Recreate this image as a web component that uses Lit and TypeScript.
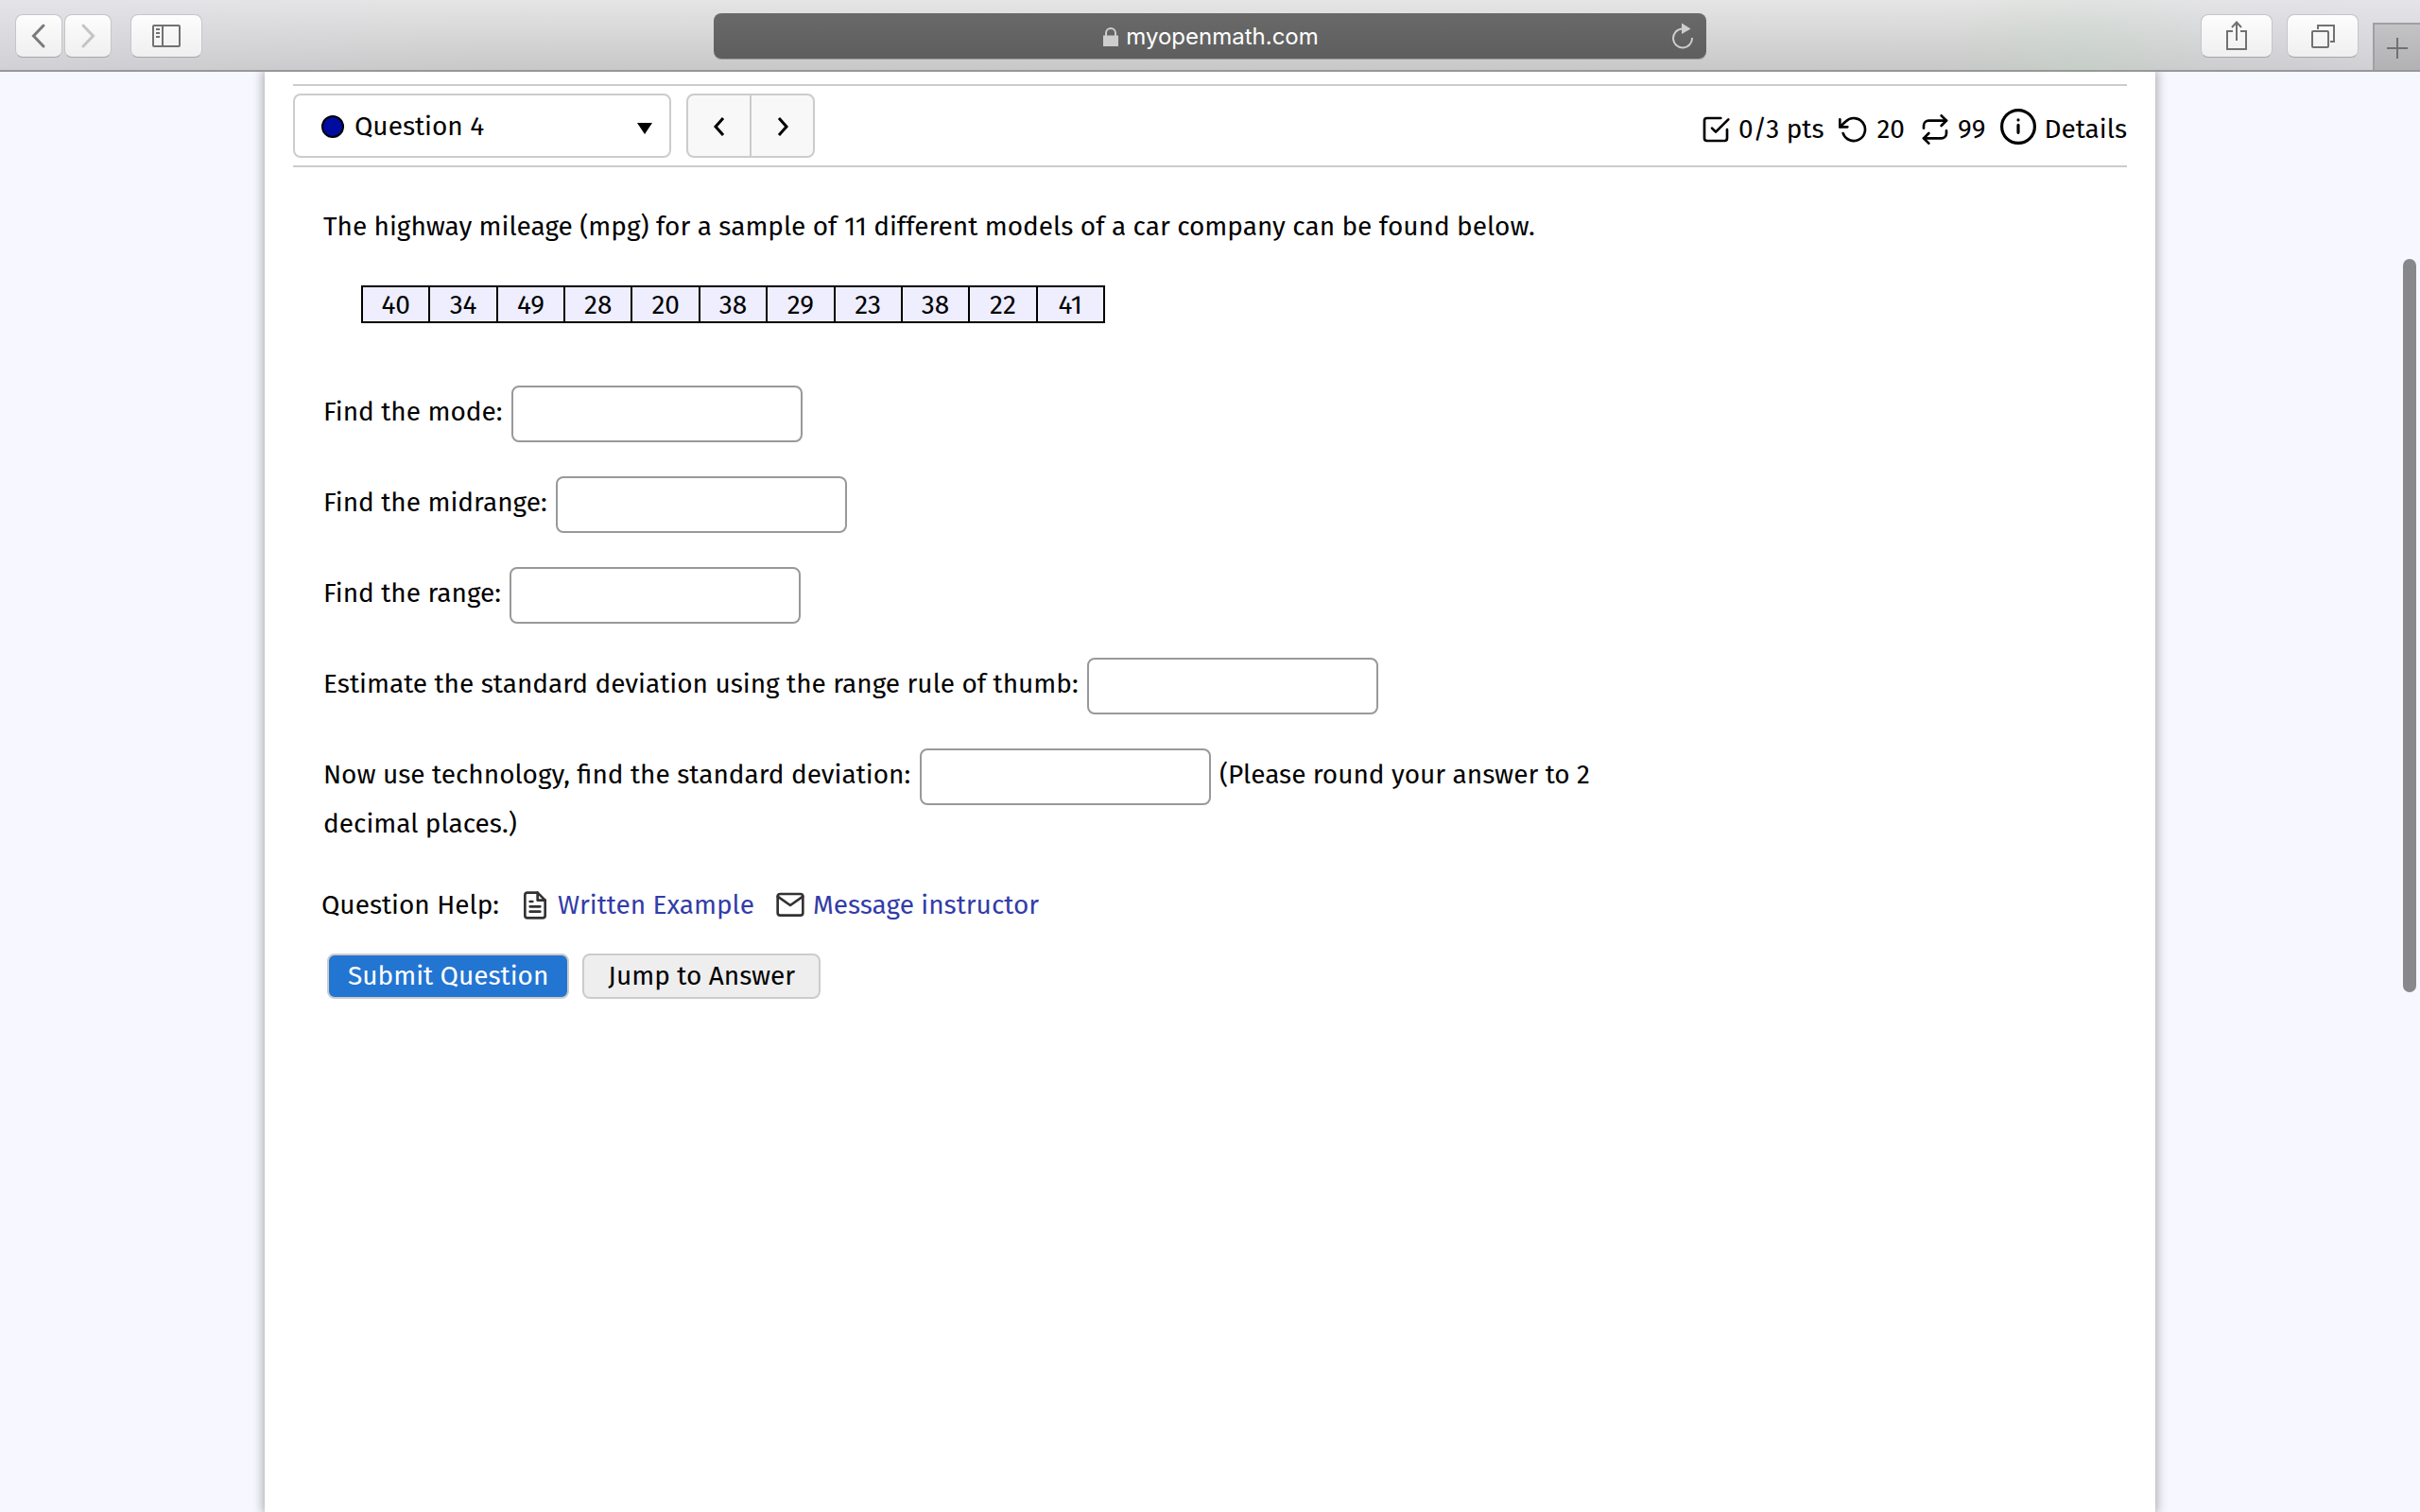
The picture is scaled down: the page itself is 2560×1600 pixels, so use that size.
import { LitElement, html, css, svg } from "lit";
import { customElement } from "lit/decorators.js";

const icon = (cls: string, box: string, body: unknown) =>
  html`<svg class=${cls} viewBox=${box} aria-hidden="true">${body}</svg>`;

@customElement("browser-toolbar")
class BrowserToolbar extends LitElement {
  static styles = css`
    :host {
      display: block;
      font-family: Inter, "Liberation Sans", sans-serif;
    }
    .bar {
      display: grid;
      grid-template-columns: 1fr 41% 1fr;
      align-items: center;
      height: 76px;
      box-sizing: border-box;
      padding-top: 2px;
      border-bottom: 2px solid #98989a;
      background:
        radial-gradient(ellipse 160px 90px at 86% 80%, rgba(190, 214, 190, 0.3), transparent),
        linear-gradient(90deg, rgba(224, 224, 240, 0.35), transparent 20%, transparent 82%, rgba(224, 224, 240, 0.35)),
        linear-gradient(#e5e5e5, #c8c8c8);
    }
    .side {
      display: flex;
      align-items: center;
      gap: 20px;
      padding-left: 16px;
    }
    .pair {
      display: flex;
      gap: 2px;
    }
    .btn {
      display: flex;
      align-items: center;
      justify-content: center;
      width: 76px;
      height: 46px;
      padding: 0;
      box-sizing: border-box;
      border: 1px solid #c6c6c9;
      border-bottom-color: #a6a6a9;
      border-radius: 8px;
      background: linear-gradient(#fdfdfd, #efeff0);
    }
    .narrow {
      width: 50px;
    }
    .glyph {
      width: 32px;
      height: 32px;
      fill: none;
      stroke: #717171;
      stroke-width: 2;
    }
    .arrow {
      stroke: #7a7a7a;
      stroke-width: 3;
      stroke-linecap: round;
    }
    .faint {
      stroke: #c4c4c4;
    }
    .address {
      display: grid;
      grid-template-columns: 1fr auto 1fr;
      align-items: center;
      height: 48px;
      border-radius: 8px;
      background: linear-gradient(#696969, #5e5e5e);
      box-shadow: 0 1px 0 #9b9b9b;
      color: #fff;
      font-size: 24px;
      line-height: 32px;
    }
    .site {
      grid-column: 2;
      display: flex;
      align-items: center;
      gap: 8px;
      padding: 2px 0 0 2px;
    }
    .lock {
      width: 16px;
      height: 20px;
      fill: #cdcdcd;
    }
    .reload {
      justify-self: end;
      display: flex;
      margin-right: 12px;
      padding: 0;
      border: 0;
      background: none;
    }
    .reload-glyph {
      width: 26px;
      height: 32px;
      fill: none;
      stroke: #cdcdcd;
      stroke-width: 2;
    }
    .end {
      align-self: stretch;
      justify-content: flex-end;
      gap: 15px;
      padding-left: 0;
    }
    .newtab {
      align-self: flex-end;
      display: flex;
      align-items: center;
      justify-content: center;
      width: 50px;
      height: 50px;
      padding: 0;
      border: 2px solid #a0a0a2;
      border-width: 2px 0 0 2px;
      background: linear-gradient(#c3c3c6, #b2b2b5);
    }
  `;

  render() {
    return html`
      <header class="bar">
        <div class="side">
          <div class="pair">
            <button class="btn narrow" aria-label="Back">
              ${icon("glyph arrow", "0 0 32 32", svg`<path d="M21 5 10.500 16 21 27"/>`)}
            </button>
            <button class="btn narrow" aria-label="Forward">
              ${icon("glyph arrow faint", "0 0 32 32", svg`<path d="M11 5 21.500 16 11 27"/>`)}
            </button>
          </div>
          <button class="btn" aria-label="Show sidebar">
            ${icon("glyph", "0 0 32 32", svg`<rect x="2" y="5" width="28" height="22" rx="1"/><path d="M12 5v22M5 9h4M5 13h4M5 17h4"/>`)}
          </button>
        </div>
        <div class="address">
          <div class="site">
            ${icon("lock", "0 0 16 20", svg`<path d="M0 8.500h2V6a6 6 0 0 1 12 0v2.500h2V20H0zM4 8.500h8V6a4 4 0 0 0-8 0z"/>`)}
            <span>myopenmath.com</span>
          </div>
          <button class="reload" aria-label="Reload">
            ${icon("reload-glyph", "0 0 26 32", svg`<path d="M12 8.500a10 10 0 1 0 11 9.500"/><path d="M12 2.500 21.500 8.500 12 14z" fill="#cdcdcd" stroke="none"/>`)}
          </button>
        </div>
        <div class="side end">
          <button class="btn" aria-label="Share">
            ${icon("glyph", "0 0 32 32", svg`<path d="M12 11H6v19h20V11h-6M16 21V2M11 7l5-5.500L21 7"/>`)}
          </button>
          <button class="btn" aria-label="Show all tabs">
            ${icon("glyph", "0 0 32 32", svg`<rect x="5" y="11" width="17" height="17" rx="1"/><path d="M11 9V5h17v17h-4"/>`)}
          </button>
          <button class="newtab" aria-label="New tab">
            ${icon("glyph", "0 0 32 32", svg`<path d="M16 6v22M5 17h22"/>`)}
          </button>
        </div>
      </header>
    `;
  }
}

@customElement("app-root")
class AppRoot extends LitElement {
  static styles = css`
    :host {
      display: flex;
      flex-direction: column;
      min-height: 100vh;
      background: #f7f7ff;
      color: #000;
      font-family: "Fira Sans", "DejaVu Sans Condensed", sans-serif;
      font-size: 28px;
      line-height: 40px;
    }
    .page {
      flex: 1;
      width: calc(100% - 80px);
      max-width: 2000px;
      box-sizing: border-box;
      margin: 0 auto;
      padding: 13px 30px 40px;
      background: #fff;
      box-shadow: 0 0 10px 2px #aaaaae;
      clip-path: inset(0 -20px 0 -20px);
    }
    .head {
      display: flex;
      align-items: center;
      justify-content: space-between;
      padding: 8px 0;
      border: 2px solid #ccc;
      border-width: 2px 0;
    }
    .nav {
      display: flex;
      gap: 16px;
    }
    .picker {
      display: flex;
      align-items: center;
      gap: 6px;
      width: 400px;
      height: 68px;
      box-sizing: border-box;
      padding: 2px 18px 0 27px;
      border: 2px solid #ccc;
      border-radius: 8px;
    }
    .dot {
      width: 26px;
      height: 26px;
      fill: #000c9f;
      stroke: #000;
      stroke-width: 2;
    }
    .select {
      flex: 1;
      appearance: none;
      padding: 0 4px;
      border: 0;
      background: none;
      color: inherit;
      font: inherit;
    }
    .caret {
      width: 16px;
      height: 12px;
      margin-top: 4px;
    }
    .steps {
      display: flex;
      height: 68px;
      box-sizing: border-box;
      border: 2px solid #ccc;
      border-radius: 8px;
      background: #f8f8f8;
    }
    .step {
      display: flex;
      align-items: center;
      justify-content: center;
      width: 65px;
      padding: 2px 0 0;
      border: 0;
      background: none;
    }
    .step + .step {
      width: 67px;
      border-left: 2px solid #ccc;
    }
    .chevron {
      width: 20px;
      height: 24px;
      fill: none;
      stroke: #000;
      stroke-width: 3;
    }
    .status {
      display: flex;
      align-items: center;
      gap: 16px;
      margin-top: 8px;
    }
    .stat {
      display: flex;
      align-items: center;
      gap: 8px;
      color: inherit;
      text-decoration: none;
    }
    .line {
      width: 32px;
      height: 32px;
      fill: none;
      stroke: currentColor;
      stroke-width: 2;
      stroke-linecap: round;
      stroke-linejoin: round;
    }
    .info {
      width: 38px;
      height: 38px;
      margin-bottom: 6px;
    }
    .question {
      max-width: 1400px;
      padding: 43px 0 0 32px;
    }
    .intro {
      margin: 0;
    }
    .data {
      width: 787px;
      margin: 42px 0 66px 40px;
      table-layout: fixed;
      border-collapse: collapse;
      background: #eef;
    }
    .cell {
      box-sizing: border-box;
      padding: 2px 0 0;
      border: 2px solid #000;
      line-height: 34px;
      text-align: center;
    }
    .field {
      margin: 0 0 36px;
    }
    .answer {
      width: 308px;
      height: 60px;
      box-sizing: border-box;
      margin: 0 2px;
      padding: 0 12px;
      border: 2px solid #999;
      border-radius: 8px;
      background: #fff;
      font: inherit;
      vertical-align: middle;
    }
    .help {
      display: flex;
      align-items: center;
      gap: 22px;
      padding: 10px 0 0 30px;
    }
    .helplink {
      display: flex;
      align-items: center;
      gap: 8px;
      color: #333ca9;
      text-decoration: none;
    }
    .helpicon {
      width: 32px;
      height: 32px;
      fill: none;
      stroke: #333;
      stroke-width: 2;
      stroke-linecap: round;
      stroke-linejoin: round;
    }
    .actions {
      display: flex;
      gap: 14px;
      padding: 31px 0 0 36px;
    }
    .action {
      height: 48px;
      box-sizing: border-box;
      padding: 0 25px;
      border: 2px solid #ccc;
      border-radius: 8px;
      background: #eee;
      color: #000;
      font: inherit;
      line-height: 42px;
    }
    .primary {
      padding: 0 20px;
      background: #2375d2;
      color: #fff;
    }
    .thumb {
      position: fixed;
      top: 274px;
      right: 4px;
      width: 14px;
      height: 48.5vh;
      border-radius: 7px;
      background: #88888c;
    }
  `;

  private values = [40, 34, 49, 28, 20, 38, 29, 23, 38, 22, 41];

  private fields: { id: string; label: string; note?: string[] }[] = [
    { id: "mode", label: "Find the mode:" },
    { id: "midrange", label: "Find the midrange:" },
    { id: "range", label: "Find the range:" },
    { id: "estimate", label: "Estimate the standard deviation using the range rule of thumb:" },
    {
      id: "deviation",
      label: "Now use technology, find the standard deviation:",
      note: ["(Please round your answer to 2", "decimal places.)"],
    },
  ];

  render() {
    return html`
      <browser-toolbar></browser-toolbar>
      <main class="page">
        <div class="head">
          <div class="nav">
            <div class="picker">
              ${icon("dot", "0 0 26 26", svg`<circle cx="13" cy="13" r="11"/>`)}
              <select class="select" aria-label="Question">
                <option>Question 4</option>
              </select>
              ${icon("caret", "0 0 16 12", svg`<path d="M0 0h16L8 12z"/>`)}
            </div>
            <div class="steps">
              <button class="step" aria-label="Previous question">
                ${icon("chevron", "0 0 20 24", svg`<path d="M14 3 6 12l8 9"/>`)}
              </button>
              <button class="step" aria-label="Next question">
                ${icon("chevron", "0 0 20 24", svg`<path d="m6 3 8 9-8 9"/>`)}
              </button>
            </div>
          </div>
          <div class="status">
            <span class="stat">
              ${icon("line", "0 0 24 24", svg`<path d="m9 11 3 3L22 4"/><path d="M21 12v7a2 2 0 0 1-2 2H5a2 2 0 0 1-2-2V5a2 2 0 0 1 2-2h11"/>`)}
              0/3 pts
            </span>
            <span class="stat">
              ${icon("line", "0 0 24 24", svg`<path d="M1 4v6h6"/><path d="M3.510 15a9 9 0 1 0 2.130-9.360L1 10"/>`)}
              20
            </span>
            <span class="stat">
              ${icon("line", "0 0 24 24", svg`<path d="m17 1 4 4-4 4"/><path d="M3 11V9a4 4 0 0 1 4-4h14M7 23l-4-4 4-4"/><path d="M21 13v2a4 4 0 0 1-4 4H3"/>`)}
              99
            </span>
            <a class="stat" href="#details">
              ${icon("line info", "0 0 24 24", svg`<circle cx="12" cy="12" r="11"/><path d="M12 11v5M12 7.500h.01"/>`)}
              Details
            </a>
          </div>
        </div>
        <section class="question">
          <p class="intro">
            The highway mileage (mpg) for a sample of 11 different models of a car company can be found below.
          </p>
          <table class="data">
            <tbody>
              <tr>
                ${this.values.map((v) => html`<td class="cell">${v}</td>`)}
              </tr>
            </tbody>
          </table>
          ${this.fields.map(
            (f) => html`
              <p class="field">
                <label for=${f.id}>${f.label}</label>
                <input class="answer" id=${f.id} type="text" />
                ${f.note?.map((part) => html`<span>${part}</span> `)}
              </p>
            `,
          )}
        </section>
        <div class="help">
          <span>Question Help:</span>
          <a class="helplink" href="#example">
            ${icon("helpicon", "0 0 24 24", svg`<path d="M14 2H6a2 2 0 0 0-2 2v16a2 2 0 0 0 2 2h12a2 2 0 0 0 2-2V8z"/><path d="M14 2v6h6M16 13H8M16 17H8M10 9H8"/>`)}
            Written Example
          </a>
          <a class="helplink" href="#message">
            ${icon("helpicon", "0 0 24 24", svg`<rect x="2" y="3" width="20" height="17" rx="2"/><path d="m22 5-10 7L2 5"/>`)}
            Message instructor
          </a>
        </div>
        <div class="actions">
          <button class="action primary">Submit Question</button>
          <button class="action">Jump to Answer</button>
        </div>
      </main>
      <div class="thumb"></div>
    `;
  }
}
